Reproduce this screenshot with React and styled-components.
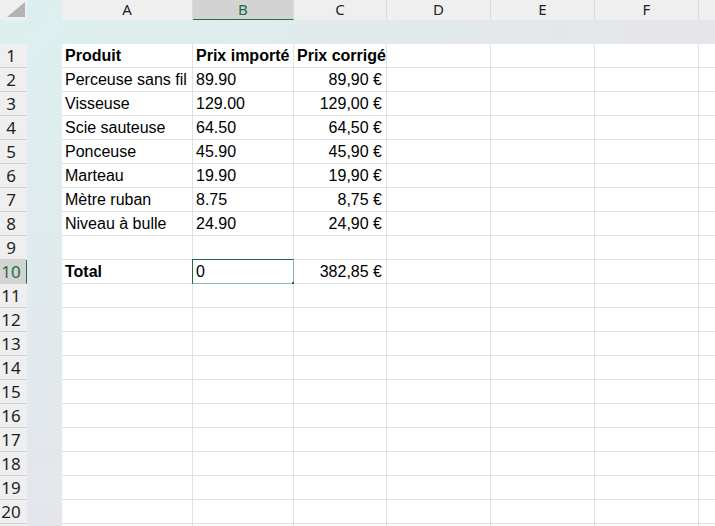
import styled, { createGlobalStyle } from "styled-components";

const GlobalStyle = createGlobalStyle`
  html, body {
    margin: 0;
    padding: 0;
    background: #e4e6eb;
  }
  * {
    box-sizing: border-box;
  }
`;

const COLS = [
  { id: "A", w: 131 },
  { id: "B", w: 101 },
  { id: "C", w: 93 },
  { id: "D", w: 104 },
  { id: "E", w: 104 },
  { id: "F", w: 104 },
  { id: "G", w: 104 },
];

const DATA = [
  [{ v: "Produit", b: true }, { v: "Prix importé", b: true }, { v: "Prix corrigé", b: true }],
  [{ v: "Perceuse sans fil" }, { v: "89.90" }, { v: "89,90 €", r: true }],
  [{ v: "Visseuse" }, { v: "129.00" }, { v: "129,00 €", r: true }],
  [{ v: "Scie sauteuse" }, { v: "64.50" }, { v: "64,50 €", r: true }],
  [{ v: "Ponceuse" }, { v: "45.90" }, { v: "45,90 €", r: true }],
  [{ v: "Marteau" }, { v: "19.90" }, { v: "19,90 €", r: true }],
  [{ v: "Mètre ruban" }, { v: "8.75" }, { v: "8,75 €", r: true }],
  [{ v: "Niveau à bulle" }, { v: "24.90" }, { v: "24,90 €", r: true }],
  [],
  [{ v: "Total", b: true }, { v: "0", sel: true }, { v: "382,85 €", r: true }],
];

const Page = styled.div`
  width: 715px;
  height: 526px;
  overflow: hidden;
  display: flex;
  flex-direction: column;
  background: radial-gradient(
    ellipse 640px 520px at 0 0,
    #dcf0ef 0%,
    #e0ebed 45%,
    #e4e6eb 100%
  );
`;

const HeaderBar = styled.div`
  display: flex;
  height: 20px;
  flex: none;
`;

const Corner = styled.div`
  width: 27px;
  height: 20px;
  flex: none;
  background: #efefef;
  display: flex;
  align-items: flex-end;
  justify-content: flex-end;
  padding: 0 2px 3px 0;
`;

const Gutter = styled.div`
  width: 35px;
  flex: none;
`;

const ColHeader = styled.div`
  width: ${(p) => p.$w}px;
  flex: none;
  height: 20px;
  background: ${(p) => (p.$active ? "#d3d3d3" : "#efefef")};
  border-right: 1px solid #dadada;
  border-bottom: 1px solid ${(p) => (p.$active ? "#217346" : "#efefef")};
  color: ${(p) => (p.$active ? "#1e6b41" : "#1f1f1f")};
  font-family: "Noto Sans", "Open Sans", sans-serif;
  font-size: 15px;
  line-height: 18px;
  text-align: center;
`;

const Band = styled.div`
  height: 24px;
  flex: none;
`;

const Row = styled.div`
  display: flex;
  height: 24px;
  flex: none;
`;

const RowHeader = styled.div`
  width: 27px;
  flex: none;
  height: 24px;
  padding-right: 4px;
  background: ${(p) => (p.$active ? "#d3d3d3" : "#efefef")};
  border-bottom: 1px solid #cfcfcf;
  border-right: 1px solid ${(p) => (p.$active ? "#217346" : "#efefef")};
  color: ${(p) => (p.$active ? "#1e6b41" : "#1f1f1f")};
  font-family: "Noto Sans", "Open Sans", sans-serif;
  font-size: 17px;
  line-height: 23px;
  text-align: center;
  white-space: nowrap;
`;

const Cell = styled.div`
  position: relative;
  width: ${(p) => p.$w}px;
  flex: none;
  height: 24px;
  background: #ffffff;
  border-right: 1px solid #e1e1e1;
  border-bottom: 1px solid #e1e1e1;
  padding: 0 4px 0 3px;
  font-family: "Liberation Sans", Arial, sans-serif;
  font-size: 16px;
  font-weight: ${(p) => (p.$bold ? 700 : 400)};
  color: #000;
  line-height: 24px;
  white-space: nowrap;
  text-align: ${(p) => (p.$right ? "right" : "left")};

  &:first-of-type {
    padding-left: 2px;
  }
`;

const Selection = styled.div`
  position: absolute;
  left: -1px;
  top: -1px;
  right: -1px;
  bottom: -2px;
  border-top: 1px solid #1f6e43;
  border-left: 1px solid #1f6e43;
  border-right: 1px solid #86b898;
  border-bottom: 2px solid #8dbc9d;
  pointer-events: none;
`;

const Handle = styled.div`
  position: absolute;
  right: -2px;
  bottom: -2px;
  width: 3px;
  height: 3px;
  background: #1f6e43;
`;

const CornerMark = () => (
  <svg width="18" height="15" viewBox="0 0 18 15">
    <polygon points="18,0 18,15 0,15" fill="#b3b3b3" />
  </svg>
);

const App = () => {
  const rows = Array.from({ length: 20 }, (_, i) => DATA[i] || []);
  return (
    <>
      <GlobalStyle />
      <Page>
        <HeaderBar>
          <Corner>
            <CornerMark />
          </Corner>
          <Gutter />
          {COLS.map((c, i) => (
            <ColHeader key={c.id} $w={c.w} $active={c.id === "B"}>
              {i < 6 ? c.id : ""}
            </ColHeader>
          ))}
        </HeaderBar>
        <Band />
        {rows.map((cells, r) => (
          <Row key={r}>
            <RowHeader $active={r === 9}>{r + 1}</RowHeader>
            <Gutter />
            {COLS.map((c, ci) => {
              const cell = cells[ci];
              return (
                <Cell
                  key={c.id}
                  $w={c.w}
                  $bold={cell && cell.b}
                  $right={cell && cell.r}
                >
                  {cell ? cell.v : ""}
                  {cell && cell.sel && (
                    <Selection>
                      <Handle />
                    </Selection>
                  )}
                </Cell>
              );
            })}
          </Row>
        ))}
        <Row>
          <RowHeader />
          <Gutter />
          {COLS.map((c) => (
            <Cell key={c.id} $w={c.w} />
          ))}
        </Row>
      </Page>
    </>
  );
};

export default App;
